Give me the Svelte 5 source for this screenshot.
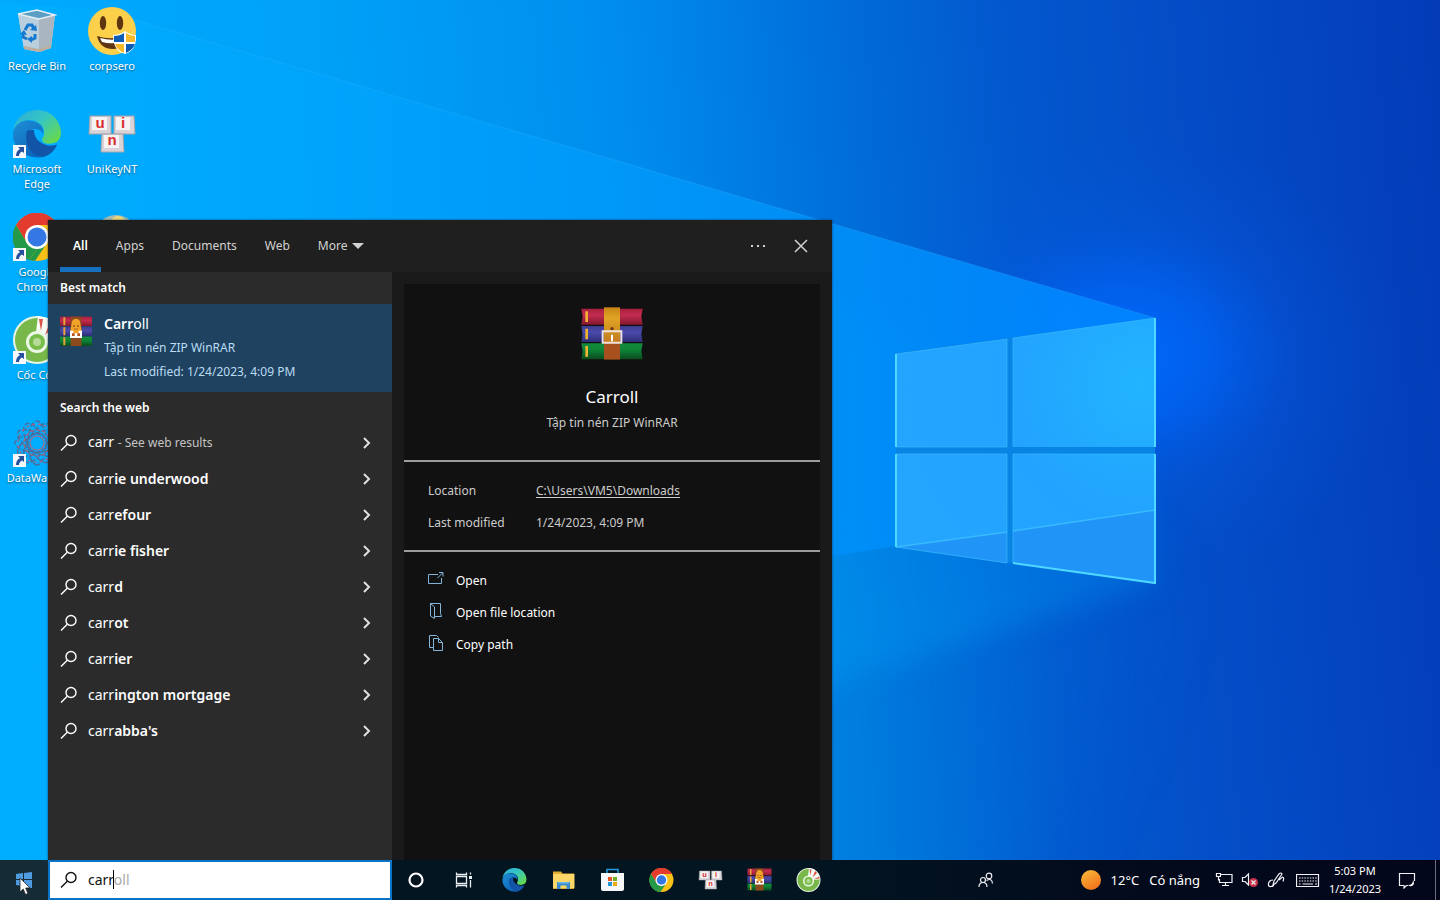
<script>
  const desktopIcons = [
    { icon: 'bin', label: 'Recycle Bin' },
    { icon: 'edge', label: 'Microsoft Edge', shortcut: true },
    { icon: 'chrome', label: 'Google Chrome', shortcut: true },
    { icon: 'coccoc', label: 'Cốc Cốc', shortcut: true },
    { icon: 'wagon', label: 'DataWagon', shortcut: true },
    { icon: 'smiley', label: 'corpsero' },
    { icon: 'unikey', label: 'UniKeyNT' },
    { icon: 'disc', label: '' },
  ];

  const tabs = ['All', 'Apps', 'Documents', 'Web'];
  let activeTab = $state('All');

  let query = $state('carr');
  const completion = 'oll';

  const suggestions = ['', 'ie underwood', 'efour', 'ie fisher', 'd', 'ot', 'ier', 'ington mortgage', "abba's"];

  const actions = [
    { icon: 'open', label: 'Open' },
    { icon: 'folder', label: 'Open file location' },
    { icon: 'copy', label: 'Copy path' },
  ];

  const pinned = [
    { icon: 'edge', label: 'Microsoft Edge' },
    { icon: 'explorer', label: 'File Explorer' },
    { icon: 'store', label: 'Microsoft Store' },
    { icon: 'chrome', label: 'Google Chrome' },
    { icon: 'unikey', label: 'UniKeyNT' },
    { icon: 'rar-small', label: 'WinRAR' },
    { icon: 'coccoc', label: 'Cốc Cốc' },
  ];
</script>

{#snippet appIcon(name)}
  <svg class="app-icon" viewBox="0 0 48 48" aria-hidden="true">
    {#if name === 'bin'}
      <path d="M5 7 25 3l17 5-4 33-12 4-15-3z" fill="#b7cbd9" />
      <path d="M5 7 26 11v34l-15-3z" fill="#b9cfde" />
      <path d="M26 11 42 8l-4 33-12 4z" fill="#a9b6c0" />
      <path d="M5 7 24 3l18 5-16 4z" fill="#5a9ec4" stroke="#e4eef4" stroke-width="1.500" />
      <path d="m11 39 15 3 12-4v3l-12 4-15-3z" fill="#bcae9f" />
      <g fill="none" stroke="#1479cf" stroke-width="3">
        <path d="m12 23 3-5h4l2 4" />
        <path d="m22 27 0 4-4 2" />
        <path d="m14 32-4-2v-4" />
      </g>
      <path d="m17 23 7 1-1-6zM19 29v7l-5-4zM7 27l4-4 3 5z" fill="#1479cf" />
    {:else if name === 'smiley'}
      <circle cx="24" cy="24" r="24" fill="#fdd04c" />
      <ellipse cx="15" cy="16" rx="3.2" ry="7" fill="#5d3511" />
      <ellipse cx="32" cy="16" rx="3.2" ry="7" fill="#5d3511" />
      <path d="M9 29q15 5 31-1-2 14-15 14T9 29z" fill="#5d3511" />
      <path d="M12 31q14 4 26-1l-1 4q-12 4-23 1z" fill="#fff" />
      <path d="M37 24q5 4 11 4 1 16-11 19-12-3-12-19 7 0 12-4z" fill="#fff" />
      <path d="M36 26v9H26v-6q6 0 10-3zm2 11h9q-2 6-9 9z" fill="#0c5cb5" />
      <path d="M38 26q4 3 9 3v6h-9zM36 37v9q-7-3-9-9z" fill="#f8b92a" />
    {:else if name === 'edge'}
      <path d="M24 0C11 0 2 9 0 20c6-10 17-12 24-8 6 3 8 8 7 13-1 3-3 4-1 7 3 3 11 2 15-1 2-3 3-5 3-9C47 9 37 0 24 0z" fill="url(#edge-green)" />
      <path d="M0 23c2-11 13-15 23-11 6 3 8 8 7 12-1-3-4-5-8-5-7 0-10 7-7 14 3 8 10 13 16 14C12 50-1 37 0 23z" fill="url(#edge-blue)" />
      <path d="M14 21c-3 14 3 24 16 26 7-2 11-6 14-12-1-1-5 2-11 0-9-3-12-9-12-15-3 0-5 0-7 1z" fill="#1255a8" />
    {:else if name === 'chrome'}
      <circle cx="24" cy="24" r="24" fill="#fbc116" />
      <path d="M3 12a24 24 0 0 1 42 0H24L14 30z" fill="#e33b2e" />
      <path d="M3 12 14 30l10 6-8 11A24 24 0 0 1 3 12z" fill="#249a48" />
      <path d="M24 36 34 30 22 48l-6-1z" fill="#249a48" />
      <circle cx="24" cy="24" r="12" fill="#fff" />
      <circle cx="24" cy="24" r="9.5" fill="#3478e6" />
    {:else if name === 'coccoc'}
      <circle cx="24" cy="24" r="24" fill="#eaf6e5" />
      <circle cx="24" cy="24" r="22" fill="#78b84a" />
      <path d="M22 24 25 0l10 2 12 15-1 6z" fill="#f6fbf3" />
      <path d="M26 3h4l-2 12zM37 6l4 4-9 9zM46 17l0 4-11 1z" fill="#dc5548" />
      <circle cx="24" cy="26" r="11" fill="#edf7e7" />
      <circle cx="24" cy="26" r="8" fill="#78bd49" />
      <circle cx="24" cy="26" r="4" fill="#b6dc98" />
    {:else if name === 'wagon'}
      <g fill="none" stroke="#54658f" stroke-width="1.4" opacity=".9">
        {#each [0, 30, 60, 90, 120, 150] as angle}
          <ellipse cx="24" cy="24" rx="22" ry="9" transform="rotate({angle} 24 24)" stroke-dasharray="5 2" />
        {/each}
      </g>
      <g fill="none" stroke="#a5678c" stroke-width="1.2">
        <circle cx="24" cy="24" r="19" stroke-dasharray="3 3" />
        <circle cx="24" cy="24" r="13" stroke-dasharray="4 2" />
        <circle cx="24" cy="24" r="7" />
      </g>
    {:else if name === 'unikey'}
      <g stroke="#aaa4aa" stroke-width="1">
        <path d="M2 6h21v18H1z" fill="#d9d4d7" />
        <path d="M26 6h20l1 18H26z" fill="#d9d4d7" />
        <path d="M14 24h21l1 18H13z" fill="#d9d4d7" />
      </g>
      <path d="M4 7h15v13H4zM28 7h14v13H28zM16 25h15v13H16z" fill="#f6f3f4" />
      <g class="key-letter">
        <text x="12" y="18">u</text>
        <text x="35" y="18">i</text>
        <text x="24" y="35">n</text>
      </g>
    {:else if name === 'disc'}
      <circle cx="28" cy="24" r="22" fill="#a9bcae" />
      <circle cx="30" cy="10" r="7" fill="#f0d979" />
    {:else if name === 'explorer'}
      <path d="M3 7h16l3 4h23v31H3z" fill="#e3ac33" />
      <path d="M3 12h43v28H3z" fill="#fbd768" />
      <path d="M11 42V28h26v14h-7v-7H18v7z" fill="#3b8bcc" />
      <path d="M13 28h22v3H13z" fill="#64b4eb" />
    {:else if name === 'store'}
      <path d="M13 13V3h22v10" fill="none" stroke="#279be3" stroke-width="3" />
      <path d="M1 10h46v32q0 4-4 4H5q-4 0-4-4z" fill="#f5f7f8" />
      <path fill="#e65325" d="M15 18h8v8h-8z" />
      <path fill="#76ac22" d="M25 18h8v8h-8z" />
      <path fill="#2496d3" d="M15 28h8v8h-8z" />
      <path fill="#eda915" d="M25 28h8v8h-8z" />
    {:else if name === 'rar'}
      <path d="M1 5h46l-1 6 1 6H1l1-6z" fill="url(#book-red)" />
      <path d="M1 18h46l-1 6 1 6H1l1-6z" fill="url(#book-blue)" />
      <path d="M1 31h46l-1 6 1 6H1l1-6z" fill="url(#book-green)" />
      <path d="M4 7h2v8H4zM4 20h2v8H4zM4 33h2v8H4z" fill="#f1b233" />
      <path d="M18 4h12v39H18z" fill="url(#strap)" />
      <path d="M18 31h12v12H18z" fill="#a9501f" />
      <circle cx="24" cy="20" r="1.2" fill="#6c3512" />
      <path d="M17 22v8.500h14V22z" fill="none" stroke="#eee3dc" stroke-width="1.500" />
      <path d="M24 24.500v5" stroke="#fff" stroke-width="1.500" />
    {:else if name === 'rar-small'}
      <path d="M0 1h48v14H0z" fill="url(#book-red)" />
      <path d="M0 16h48v14H0z" fill="url(#book-blue)" />
      <path d="M0 31h48v14H0z" fill="url(#book-green)" />
      <path d="M5 2h3v12H5zM5 17h3v12H5zM5 32h3v12H5z" fill="#e9a13a" />
      <path d="M16 1h16v44H16z" fill="#8d4a1c" />
      <path d="M17 15q0-11 7-11t7 11q3 7-1 14H18q-4-7-1-14z" fill="#f2a32a" />
      <path d="M20 14h2v2h-2zM26 14h2v2h-2zM21 19h6v1h-6z" fill="#6c3512" />
      <path d="M15 22h5v4h8v-4h5v11H15z" fill="#fff" />
      <path d="M18 26v4h4v-4zM26 26v4h4v-4z" fill="#b3521f" />
    {/if}
  </svg>
{/snippet}

{#snippet magnifier()}
  <svg class="magnifier" viewBox="0 0 18 18" aria-hidden="true">
    <circle cx="11" cy="6.5" r="5" />
    <path d="M7.300 10.200 1 16.500" />
  </svg>
{/snippet}

<div class="screen">
  <main class="desktop">
    <svg class="wallpaper" viewBox="0 0 1440 900" preserveAspectRatio="xMidYMid slice" aria-hidden="true">
      <defs>
        <linearGradient id="sky" gradientUnits="userSpaceOnUse" x1="0" y1="200" x2="1440" y2="80">
          <stop offset="0" stop-color="#00aaff" />
          <stop offset=".22" stop-color="#00a2f8" />
          <stop offset=".43" stop-color="#008eee" />
          <stop offset=".58" stop-color="#006fda" />
          <stop offset=".7" stop-color="#0358ce" />
          <stop offset=".85" stop-color="#044ac5" />
          <stop offset="1" stop-color="#043cb8" />
        </linearGradient>
        <linearGradient id="beam" x1="0" y1="0" x2="1" y2="0">
          <stop offset="0" stop-color="#00b0ff" />
          <stop offset=".35" stop-color="#00a2fb" />
          <stop offset=".72" stop-color="#0090f8" />
          <stop offset="1" stop-color="#0084ff" />
        </linearGradient>
        <linearGradient id="low-beam" x1="0" y1="0" x2="1" y2="0">
          <stop offset="0" stop-color="#00b0ff" />
          <stop offset=".7" stop-color="#0098f0" />
          <stop offset="1" stop-color="#0074e0" />
        </linearGradient>
        <linearGradient id="floor" x1="0" y1="0" x2="1" y2="0">
          <stop offset="0" stop-color="#00a8fa" />
          <stop offset=".7" stop-color="#0088e2" />
          <stop offset="1" stop-color="#0460d0" stop-opacity="0" />
        </linearGradient>
        <radialGradient id="glow">
          <stop offset="0" stop-color="#006cff" stop-opacity=".9" />
          <stop offset=".3" stop-color="#0066fa" stop-opacity=".7" />
          <stop offset=".6" stop-color="#045ce8" stop-opacity=".25" />
          <stop offset="1" stop-color="#0455d8" stop-opacity="0" />
        </radialGradient>
        <radialGradient id="pane" gradientUnits="userSpaceOnUse" cx="1140" cy="385" r="270">
          <stop offset="0" stop-color="#22b4ff" />
          <stop offset=".5" stop-color="#22a3ff" />
          <stop offset="1" stop-color="#24a6ff" />
        </radialGradient>
        <linearGradient id="edge-green" x1="0" y1="0" x2="1" y2=".8">
          <stop offset="0" stop-color="#2aa9e0" />
          <stop offset=".5" stop-color="#36c6c2" />
          <stop offset="1" stop-color="#69d94c" />
        </linearGradient>
        <linearGradient id="edge-blue" x1="0" y1="0" x2=".6" y2="1">
          <stop offset="0" stop-color="#1f8fd4" />
          <stop offset="1" stop-color="#0c65bd" />
        </linearGradient>
        <linearGradient id="book-red" x1="0" y1="0" x2="0" y2="1">
          <stop offset="0" stop-color="#a81f3e" />
          <stop offset=".4" stop-color="#c42c4e" />
          <stop offset="1" stop-color="#84182f" />
        </linearGradient>
        <linearGradient id="book-blue" x1="0" y1="0" x2="0" y2="1">
          <stop offset="0" stop-color="#3f3b8e" />
          <stop offset=".4" stop-color="#4a4aac" />
          <stop offset="1" stop-color="#2d2e76" />
        </linearGradient>
        <linearGradient id="book-green" x1="0" y1="0" x2="0" y2="1">
          <stop offset="0" stop-color="#128a3c" />
          <stop offset=".4" stop-color="#0f8438" />
          <stop offset="1" stop-color="#0a4a1e" />
        </linearGradient>
        <linearGradient id="strap" x1="0" y1="0" x2="0" y2="1">
          <stop offset="0" stop-color="#c88415" />
          <stop offset=".2" stop-color="#e0a424" />
          <stop offset="1" stop-color="#b0601b" />
        </linearGradient>
        <linearGradient id="sun" x1="0" y1="0" x2=".6" y2="1">
          <stop offset="0" stop-color="#f9bd3c" />
          <stop offset="1" stop-color="#f2751c" />
        </linearGradient>
        <filter id="soft" x="-10%" y="-10%" width="120%" height="120%">
          <feGaussianBlur stdDeviation="14" />
        </filter>
        <filter id="softer" x="-20%" y="-20%" width="140%" height="140%">
          <feGaussianBlur stdDeviation="50" />
        </filter>
      </defs>
      <rect width="1440" height="900" fill="url(#sky)" />
      <path d="M1180 560 950 1000-60 1000V560z" fill="url(#floor)" filter="url(#softer)" opacity=".7" />
      <ellipse cx="1130" cy="355" rx="270" ry="220" fill="url(#glow)" />
      <path d="M1155 583 780 700-60 960V300l900 0 300 150z" fill="url(#low-beam)" filter="url(#soft)" opacity=".6" />
      <path d="M1155 318 100 10-40 0v1000L832 556l64-10 259-36z" fill="url(#beam)" opacity=".9" />
      <path d="M1155 318 100 10" stroke="#34b4ff" stroke-width="1.500" opacity=".2" />
      <path d="M896 353 1155 318v265L896 547z" fill="#0784e4" />
      <g fill="url(#pane)">
        <path d="M896 354 1007 339v108H896z" />
        <path d="M1013 338 1155 318v129H1013z" />
        <path d="M896 454h111v109L896 547z" />
        <path d="M1013 454h142v129l-142-20z" />
      </g>
      <path d="m896 547 111-15v31zM1013 531l142-21v73l-142-20z" fill="#218ff4" opacity=".7" />
      <path d="m896 547 111-15M1013 531l142-21" stroke="#39baff" stroke-width="1.500" />
      <g fill="none" stroke="#3ab8ff" stroke-width="1" opacity=".7">
        <path d="M1007 339v108H896M1013 447V338M1007 563V454H896M1013 563V454h142" />
        <path d="m896 354 111-15M1013 338l142-20M896 547l111 16" />
      </g>
      <g fill="none" stroke="#4ed8ff" stroke-width="2">
        <path d="M896 447v-93M1155 318v129M896 454v93M1013 563l142 20V454" />
      </g>
    </svg>

    <div class="icon-grid">
      {#each desktopIcons as item}
        <button class="desktop-icon" aria-label={item.label || 'Disc'}>
          <span class="icon-box">
            {@render appIcon(item.icon)}
            {#if item.shortcut}
              <svg class="shortcut" viewBox="0 0 13 13" aria-hidden="true">
                <path d="M0 0h13v13H0z" fill="#f4f7fb" />
                <path d="M5 2h6v6L9 6.500Q6 8 6 11H3q0-5 4-7z" fill="#26509b" />
              </svg>
            {/if}
          </span>
          <span class="icon-label">{item.label}</span>
        </button>
      {/each}
    </div>

    <section class="flyout" aria-label="Search">
      <header class="flyout-head">
        {#each tabs as tab}
          <button class="tab" class:active={activeTab === tab} onclick={() => (activeTab = tab)}>{tab}</button>
        {/each}
        <button class="tab more">
          More
          <svg width="12" height="6" viewBox="0 0 12 6" aria-hidden="true"><path d="M0 0h12L6 6z" fill="currentColor" /></svg>
        </button>
        <span class="spacer"></span>
        <button class="head-button" aria-label="Options">
          <svg width="16" height="16" viewBox="0 0 16 16" fill="currentColor" aria-hidden="true">
            <path d="M1 7h2v2H1zM7 7h2v2H7zM13 7h2v2h-2z" />
          </svg>
        </button>
        <button class="head-button" aria-label="Close">
          <svg width="16" height="16" viewBox="0 0 16 16" fill="none" stroke="currentColor" stroke-width="1.5" aria-hidden="true">
            <path d="m2 2 12 12M14 2 2 14" />
          </svg>
        </button>
      </header>

      <div class="flyout-body">
        <div class="results">
          <h2>Best match</h2>
          <button class="best">
            <span class="best-icon">{@render appIcon('rar-small')}</span>
            <span class="best-text">
              <span class="best-name"><b>Carr</b>oll</span>
              <span>Tập tin nén ZIP WinRAR</span>
              <span>Last modified: 1/24/2023, 4:09 PM</span>
            </span>
          </button>
          <h2>Search the web</h2>
          <ul>
            {#each suggestions as rest}
              <li>
                <button class="suggestion" class:first={!rest}>
                  {@render magnifier()}
                  <span class="term">carr{#if rest}<b>{rest}</b>{:else}{' '}<small>- See web results</small>{/if}</span>
                  <svg class="chevron" viewBox="0 0 8 12" aria-hidden="true"><path d="m1 1 5 5-5 5" /></svg>
                </button>
              </li>
            {/each}
          </ul>
        </div>

        <div class="preview">
          <div class="card">
            <div class="hero">
              <span class="hero-icon">{@render appIcon('rar')}</span>
              <h1>Carroll</h1>
              <p>Tập tin nén ZIP WinRAR</p>
            </div>
            <dl>
              <dt>Location</dt>
              <dd><a href="#downloads">C:\Users\VM5\Downloads</a></dd>
              <dt>Last modified</dt>
              <dd>1/24/2023, 4:09 PM</dd>
            </dl>
            <div class="actions">
              {#each actions as action}
                <button class="action">
                  <svg viewBox="0 0 16 16" aria-hidden="true">
                    {#if action.icon === 'open'}
                      <path d="M10 3.500H.500v9h13V7M9.500 7l5-5M11 1.500h4v4" />
                    {:else if action.icon === 'folder'}
                      <path d="M2.500 13V.500h10v10l1 3h-7M2.500.500l4 3.500v11.500l-4-2.500z" />
                    {:else}
                      <path d="M5 12.500H1.500V.500h7l2 2M5.500 3.500h5l4 4v8h-9zM10.500 3.500v4h4" />
                    {/if}
                  </svg>
                  {action.label}
                </button>
              {/each}
            </div>
          </div>
        </div>
      </div>
    </section>
  </main>

  <footer class="taskbar">
    <button class="start" aria-label="Start">
      <svg width="18" height="18" viewBox="0 0 18 18" fill="#4f9be0" aria-hidden="true">
        <path d="m1 3 7-1v6H1zM9 2l8-1v7H9zM1 9h7v6l-7-1zM9 9h8v8l-8-1z" />
      </svg>
      <svg class="cursor" viewBox="0 0 12 19" aria-hidden="true">
        <path d="M1 1v14l3.200-3 2.300 5.500 2.500-1-2.300-5.500H11z" fill="#fff" stroke="#222" stroke-width=".8" />
      </svg>
    </button>
    <label class="search">
      {@render magnifier()}
      <span class="field">
        <input type="text" aria-label="Type here to search" bind:value={query} />
        <span class="ghost" aria-hidden="true"><span class="typed">{query}</span><span class="rest">{completion}</span></span>
      </span>
    </label>

    <button class="task" aria-label="Cortana">
      <svg width="18" height="18" viewBox="0 0 18 18" aria-hidden="true"><circle cx="9" cy="9" r="6.500" fill="none" stroke="#fff" stroke-width="2.200" /></svg>
    </button>
    <button class="task" aria-label="Task View">
      <svg width="18" height="18" viewBox="0 0 18 18" fill="none" stroke="#e9eef0" stroke-width="1.300" aria-hidden="true">
        <path d="M1.500 5.500h10v7h-10zM1.500 1.500v2h10v-2M1.500 16.500v-2h10v2M15.500 1.500v2M15.500 9v7.500" />
        <path d="M14 5h3v3h-3z" fill="#e9eef0" stroke="none" />
      </svg>
    </button>
    <div class="pinned">
      {#each pinned as app}
        <button aria-label={app.label}>{@render appIcon(app.icon)}</button>
      {/each}
    </div>

    <span class="spacer"></span>

    <button class="people" aria-label="People">
      <svg width="16" height="16" viewBox="0 0 16 16" aria-hidden="true">
        <circle cx="5" cy="8" r="2.500" />
        <path d="M1 15q0-4.500 4-4.500T9 15" />
        <circle cx="11" cy="4" r="2.800" />
        <path d="M8.500 8.500q5.500-3 6 3" />
      </svg>
    </button>
    <button class="weather">
      <svg width="20" height="20" viewBox="0 0 20 20" aria-hidden="true"><circle cx="10" cy="10" r="10" fill="url(#sun)" stroke="none" /></svg>
      <span>12°C</span>
      <span>Có nắng</span>
    </button>
    <div class="tray">
      <button aria-label="Network">
        <svg width="18" height="16" viewBox="0 0 18 16" aria-hidden="true">
          <path d="M6 2.500h11v8H4.500V7M10.500 10.500v3M7 13.500h7M1.500 1.500h4v3h-4zM3.500 4.500v4" />
        </svg>
      </button>
      <button aria-label="Volume muted">
        <svg width="18" height="16" viewBox="0 0 18 16" aria-hidden="true">
          <path d="M1.500 5.500H4l3.500-3.500v11L4 9.500H1.500z" />
          <circle cx="12.500" cy="10.500" r="4.500" fill="#c8324b" stroke="none" />
          <path d="m10.500 8.500 4 4M14.500 8.500l-4 4" />
        </svg>
      </button>
      <button aria-label="Windows Ink">
        <svg width="18" height="16" viewBox="0 0 18 16" aria-hidden="true">
          <path d="m6 13 1-4 5-7q2-2 3 0l-6 9zM6 8q-4 0-4.500 3.500T4 14.500q3 0 3-3M12 8l3.500-3q2 0 .500 4.500" />
        </svg>
      </button>
      <button class="keyboard" aria-label="Touch keyboard">
        <svg width="24" height="14" viewBox="0 0 24 14" aria-hidden="true">
          <path d="M.500 .500h22v12H.500z" />
          <path d="M3 4h18M3 7h18" stroke-dasharray="1.500 1.200" />
          <path d="M3 10h1.500M6.500 10h10.500M19 10h2" />
        </svg>
      </button>
    </div>
    <button class="clock"><span>5:03 PM</span><span>1/24/2023</span></button>
    <button class="notify" aria-label="Notifications">
      <svg width="18" height="18" viewBox="0 0 18 18" aria-hidden="true">
        <path d="M10 14.500H8.500L6 17v-2.500H1.500v-12h15V10" />
        <path d="M15 9q2.500 4-1 6-2.500.800-4-1 5 0 5-5z" fill="#f0f0f4" stroke="none" />
      </svg>
    </button>
    <button class="show-desktop" aria-label="Show desktop"></button>
  </footer>
</div>

<style>
:global(body) {
  margin: 0;
  background: #0086e9;
}

.screen {
  display: flex;
  flex-direction: column;
  height: 100vh;
  overflow: hidden;
  font-family: "Noto Sans", "Open Sans", sans-serif;
  font-size: 12px;
  line-height: 16px;
  color: #fff;
}

button {
  padding: 0;
  border: none;
  background: none;
  color: inherit;
  font: inherit;
  cursor: default;
}

h1,
h2,
p,
ul,
dl,
dd {
  margin: 0;
  padding: 0;
}

b {
  font-weight: 600;
}

.spacer {
  flex: 1;
}

.desktop {
  position: relative;
  flex: 1;
  min-height: 0;
}

.wallpaper {
  position: absolute;
  top: 0;
  left: 0;
  width: 100vw;
  height: 100vh;
}

.app-icon {
  display: block;
  width: 100%;
  height: 100%;
}

.key-letter {
  font-family: "Liberation Sans", sans-serif;
  font-size: 15px;
  font-weight: 700;
  fill: #d92d2d;
  text-anchor: middle;
}

/* desktop icons */
.icon-grid {
  position: relative;
  display: grid;
  grid-template-rows: repeat(5, 103px);
  grid-auto-flow: column;
  grid-auto-columns: 75px;
  justify-content: start;
}

.desktop-icon {
  display: flex;
  flex-direction: column;
  align-items: center;
  gap: 3px;
  padding: 7px 1px 0 0;
}

.icon-box {
  position: relative;
  width: 48px;
  height: 48px;
}

.shortcut {
  position: absolute;
  left: 0;
  bottom: 0;
  width: 13px;
  height: 13px;
}

.icon-label {
  font-size: 11px;
  line-height: 15px;
  text-shadow: 0 1px 2px rgba(0, 0, 0, 0.5);
}

/* search flyout */
.flyout {
  position: absolute;
  top: 220px;
  bottom: 0;
  left: 48px;
  width: 784px;
  display: flex;
  flex-direction: column;
  background: #1a1a1a;
  box-shadow: 0 0 2px rgba(0, 20, 50, 0.7);
}

.flyout-head {
  display: flex;
  gap: 2px;
  height: 52px;
  padding: 0 11px 0 12px;
  background: #1f1f1f;
  color: #d2d2d2;
}

.tab {
  padding: 0 13px;
  border-top: 4px solid transparent;
  border-bottom: 5px solid transparent;
}

.tab.active {
  border-bottom-color: #1670bf;
  color: #fff;
  font-weight: 600;
}

.more {
  display: flex;
  align-items: center;
  gap: 5px;
}

.head-button {
  display: grid;
  place-items: center;
  width: 41px;
}

.flyout-body {
  display: flex;
  flex: 1;
  min-height: 0;
}

.results {
  width: 344px;
  background: #2b2b2b;
}

h2 {
  padding-left: 12px;
  font-size: 12px;
  font-weight: 600;
  line-height: 32px;
}

.best {
  display: flex;
  gap: 12px;
  width: 100%;
  padding: 8px 12px;
  background: #1e4260;
  color: #bcdcf2;
  text-align: left;
}

.best-icon {
  width: 32px;
  height: 32px;
  padding-top: 4px;
}

.best-text {
  display: flex;
  flex-direction: column;
  line-height: 24px;
}

.best-name {
  font-size: 14px;
  color: #fff;
}

ul {
  list-style: none;
}

.suggestion {
  display: flex;
  align-items: center;
  gap: 10px;
  width: 100%;
  height: 36px;
  padding: 0 20px 0 12px;
  font-size: 14px;
  text-align: left;
}

.suggestion.first {
  height: 37px;
}

.term {
  flex: 1;
}

small {
  font-size: 12px;
  color: #c4c4c4;
}

.magnifier {
  width: 18px;
  height: 18px;
  fill: none;
  stroke: currentColor;
  stroke-width: 1.4;
}

.chevron {
  width: 8px;
  height: 12px;
  margin-right: 1px;
  fill: none;
  stroke: #e0e0e0;
  stroke-width: 2;
}

.preview {
  flex: 1;
  display: flex;
  padding: 12px 12px 0;
}

.card {
  flex: 1;
  background: #111;
  color: #ccc;
}

.hero {
  display: flex;
  flex-direction: column;
  align-items: center;
  height: 176px;
  border-bottom: 2px solid #9c9c9c;
}

.hero-icon {
  width: 64px;
  height: 64px;
  margin-top: 18px;
}

h1 {
  margin-top: 18px;
  font-size: 17px;
  font-weight: 400;
  line-height: 26px;
  color: #fff;
}

.hero p {
  line-height: 26px;
}

dl {
  display: grid;
  grid-template-columns: 108px 1fr;
  padding: 13px 24px 11px;
  border-bottom: 2px solid #9c9c9c;
  line-height: 32px;
}

a {
  color: inherit;
  text-underline-offset: 2px;
}

.actions {
  display: flex;
  flex-direction: column;
  padding: 13px 24px;
}

.action {
  display: flex;
  align-items: center;
  gap: 12px;
  height: 32px;
  color: #fff;
}

.action svg {
  width: 16px;
  height: 16px;
  margin-bottom: 5px;
  fill: none;
  stroke: #83b5d8;
}

/* taskbar */
.taskbar {
  position: relative;
  display: flex;
  height: 40px;
  background: linear-gradient(90deg, #02151f, #021521 55%, #030a1c 80%, #03061b);
}

.start {
  position: relative;
  width: 48px;
  background: #152b35;
}

.start svg {
  vertical-align: middle;
}

.start .cursor {
  position: absolute;
  top: 17px;
  left: 19px;
  width: 12px;
  height: 19px;
}

.search {
  display: flex;
  align-items: center;
  gap: 10px;
  box-sizing: border-box;
  width: 344px;
  padding-left: 10px;
  border: 2px solid #0a74c8;
  background: #fff;
  color: #111;
}

.field {
  position: relative;
  flex: 1;
  font-size: 14px;
  line-height: 20px;
}

input {
  box-sizing: border-box;
  display: block;
  width: 100%;
  height: 20px;
  padding: 0;
  border: none;
  outline: none;
  background: none;
  color: inherit;
  font: inherit;
}

.ghost {
  position: absolute;
  top: 0;
  left: 0;
  color: #a9a9a9;
  pointer-events: none;
}

.typed {
  visibility: hidden;
}

.rest {
  box-shadow: -1px 0 #000;
}

.task {
  display: grid;
  place-items: center;
  width: 48px;
}

.pinned {
  display: flex;
  padding-left: 2px;
}

.pinned button {
  width: 49px;
  padding: 8px 12px;
}

.people,
.notify {
  width: 48px;
}

.people svg,
.weather svg,
.tray svg,
.notify svg {
  vertical-align: middle;
  fill: none;
  stroke: #f0f0f4;
  stroke-width: 1.2;
}

.people {
  margin-right: 60px;
}

.weather {
  display: flex;
  align-items: center;
  gap: 10px;
  padding: 0 11px;
  font-size: 13px;
}

.tray {
  display: flex;
}

.tray button {
  width: 26px;
}

.tray .keyboard {
  width: 38px;
}

.clock {
  display: flex;
  flex-direction: column;
  align-items: center;
  justify-content: center;
  width: 56px;
  font-size: 11px;
  line-height: 18px;
}

.notify {
  margin-right: 4px;
}

.show-desktop {
  width: 5px;
  border-left: 1px solid #6a6f7c;
}
</style>
